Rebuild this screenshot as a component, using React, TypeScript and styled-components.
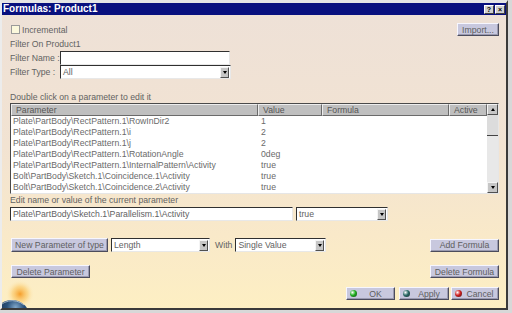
import styled, { createGlobalStyle } from "styled-components";

const GlobalStyle = createGlobalStyle`
  html, body { margin: 0; padding: 0; }
  body {
    width: 512px;
    height: 313px;
    overflow: hidden;
    background: #d8d8d8;
    font-family: "Liberation Sans", Arial, sans-serif;
  }
`;

const Window = styled.div`
  box-sizing: border-box;
  width: 508px;
  height: 310px;
  border-top: 3px solid #e4e4e4;
  border-left: 2px solid #ececec;
  border-right: 2px solid #3a3a3a;
  border-bottom: 2px solid #3a3a3a;
  display: flex;
  flex-direction: column;
`;

const TitleBar = styled.div`
  height: 12px;
  flex: none;
  background: #08107e;
  display: flex;
  align-items: center;
  justify-content: space-between;
  padding: 0 1px 0 1px;
`;

const Title = styled.span`
  color: #fff;
  font-weight: bold;
  font-size: 10px;
  line-height: 12px;
`;

const TitleButtons = styled.div`
  display: flex;
  gap: 1px;
`;

const TitleBtn = styled.div`
  width: 10px;
  height: 9px;
  box-sizing: border-box;
  background: #d0d0d0;
  border: 1px solid;
  border-color: #fff #404040 #404040 #fff;
  font-size: 7px;
  font-weight: bold;
  line-height: 7px;
  text-align: center;
  color: #000;
`;

const Body = styled.div`
  position: relative;
  flex: 1;
  overflow: hidden;
  padding: 0 7px 0 8px;
  display: flex;
  flex-direction: column;
  background: linear-gradient(#eee1d7 0%, #f2e3d2 45%, #f9e9c9 75%, #fdefc3 100%);
`;

const Row = styled.div<{ $mt?: number; $h?: number }>`
  display: flex;
  align-items: center;
  margin-top: ${(p) => p.$mt ?? 0}px;
  height: ${(p) => p.$h ?? 14}px;
  flex: none;
`;

const Spacer = styled.div`
  flex: 1;
`;

const Text = styled.div<{ $mt?: number }>`
  font-size: 8.7px;
  line-height: 11px;
  color: #626262;
  margin-top: ${(p) => p.$mt ?? 0}px;
  white-space: nowrap;
`;

const Label = styled.span<{ $w?: number; $ml?: number }>`
  font-size: 8.7px;
  color: #626262;
  white-space: nowrap;
  width: ${(p) => (p.$w ? `${p.$w}px` : "auto")};
  margin-left: ${(p) => p.$ml ?? 0}px;
  flex: none;
`;

const CheckBox = styled.div`
  width: 9px;
  height: 9px;
  box-sizing: border-box;
  margin: 0 2px 0 1px;
  background: #fbf8dc;
  border: 1px solid #9a9a9a;
`;

const Button = styled.button<{ $w: number; $h?: number }>`
  box-sizing: border-box;
  width: ${(p) => p.$w}px;
  height: ${(p) => p.$h ?? 13}px;
  padding: 0;
  margin: 0;
  flex: none;
  font-family: "Liberation Sans", Arial, sans-serif;
  font-size: 8.7px;
  color: #5e5e5e;
  background: #c8c8de;
  border: 1px solid;
  border-color: #f6f6ff #4c4c5c #4c4c5c #f6f6ff;
  box-shadow: inset -1px -1px 0 #9a9ab0;
  display: flex;
  align-items: center;
  justify-content: center;
`;

const BallButton = styled(Button)`
  justify-content: flex-start;
  padding-left: 3px;
`;

const Ball = styled.span<{ $c: string }>`
  width: 7px;
  height: 7px;
  border-radius: 50%;
  flex: none;
  background: radial-gradient(circle at 35% 35%, #fff 0%, ${(p) => p.$c} 45%, #111 120%);
`;

const BallText = styled.span`
  flex: 1;
  text-align: center;
`;

const TextBox = styled.div<{ $w: number }>`
  box-sizing: border-box;
  width: ${(p) => p.$w}px;
  height: 14px;
  flex: none;
  background: #fff;
  border: 1px solid;
  border-color: #303030 #e8e8e8 #e8e8e8 #303030;
  font-size: 8.7px;
  line-height: 12px;
  padding-left: 2px;
  color: #626262;
  white-space: nowrap;
  overflow: hidden;
`;

const SelectBox = styled(TextBox)`
  display: flex;
  align-items: center;
  padding-right: 1px;
`;

const SelectText = styled.span`
  flex: 1;
`;

const ArrowBtn = styled.div`
  width: 9px;
  height: 11px;
  box-sizing: border-box;
  background: #c6c6c6;
  border: 1px solid;
  border-color: #f4f4f4 #505050 #505050 #f4f4f4;
  display: flex;
  align-items: center;
  justify-content: center;
  &::after {
    content: "";
    border-left: 2px solid transparent;
    border-right: 2px solid transparent;
    border-top: 3px solid #000;
  }
`;

const UpArrowBtn = styled(ArrowBtn)`
  width: 11px;
  &::after {
    border-top: none;
    border-bottom: 3px solid #000;
  }
`;

const DownArrowBtn = styled(ArrowBtn)`
  width: 11px;
`;

const Table = styled.div`
  box-sizing: border-box;
  width: 489px;
  flex: none;
  background: #fff;
  border: 1px solid;
  border-color: #4a4a4a #e6e6e6 #e6e6e6 #4a4a4a;
  display: grid;
  grid-template-columns: 476px 11px;
`;

const cols = "247px 64px 127px 38px";

const TableMain = styled.div`
  display: flex;
  flex-direction: column;
`;

const HeaderRow = styled.div`
  display: grid;
  grid-template-columns: ${cols};
  height: 12px;
`;

const HeaderCell = styled.div`
  box-sizing: border-box;
  background: #bfbfbf;
  border: 1px solid;
  border-color: #ededed #6a6a6a #6a6a6a #ededed;
  font-size: 8.7px;
  line-height: 10px;
  color: #555;
  padding-left: 4px;
`;

const DataRow = styled.div`
  display: grid;
  grid-template-columns: ${cols};
  height: 11px;
`;

const DataCell = styled.div`
  font-size: 8.7px;
  line-height: 11px;
  color: #6a6a6a;
  padding-left: 2px;
  white-space: nowrap;
  overflow: hidden;
`;

const ValueCell = styled(DataCell)`
  padding-left: 3px;
`;

const ScrollBar = styled.div`
  display: flex;
  flex-direction: column;
  background: #e6e6e6;
`;

const Thumb = styled.div`
  height: 21px;
  box-sizing: border-box;
  background: #dcdcdc;
  border-bottom: 1px solid #444;
`;

const Track = styled.div`
  flex: 1;
  background: #e8e8e8;
`;

const Globe = styled.svg`
  position: absolute;
  left: 0;
  bottom: 0;
`;

const rows: [string, string][] = [
  ["Plate\\PartBody\\RectPattern.1\\RowInDir2", "1"],
  ["Plate\\PartBody\\RectPattern.1\\i", "2"],
  ["Plate\\PartBody\\RectPattern.1\\j", "2"],
  ["Plate\\PartBody\\RectPattern.1\\RotationAngle", "0deg"],
  ["Plate\\PartBody\\RectPattern.1\\InternalPattern\\Activity", "true"],
  ["Bolt\\PartBody\\Sketch.1\\Coincidence.1\\Activity", "true"],
  ["Bolt\\PartBody\\Sketch.1\\Coincidence.2\\Activity", "true"],
];

function Select(props: { w: number; value: string }) {
  return (
    <SelectBox $w={props.w}>
      <SelectText>{props.value}</SelectText>
      <ArrowBtn />
    </SelectBox>
  );
}

export default function App() {
  return (
    <>
      <GlobalStyle />
      <Window>
        <TitleBar>
          <Title>Formulas: Product1</Title>
          <TitleButtons>
            <TitleBtn>?</TitleBtn>
            <TitleBtn>×</TitleBtn>
          </TitleButtons>
        </TitleBar>
        <Body>
          <Row $mt={8} $h={13}>
            <CheckBox />
            <Label>Incremental</Label>
            <Spacer />
            <Button $w={42}>Import...</Button>
          </Row>
          <Text $mt={3}>Filter On Product1</Text>
          <Row $mt={1}>
            <Label $w={50}>Filter Name :</Label>
            <TextBox $w={170} />
          </Row>
          <Row>
            <Label $w={50}>Filter Type :</Label>
            <Select w={171} value="All" />
          </Row>
          <Text $mt={13}>Double click on a parameter to edit it</Text>
          <Table>
            <TableMain>
              <HeaderRow>
                <HeaderCell>Parameter</HeaderCell>
                <HeaderCell>Value</HeaderCell>
                <HeaderCell>Formula</HeaderCell>
                <HeaderCell>Active</HeaderCell>
              </HeaderRow>
              {rows.map(([name, value]) => (
                <DataRow key={name}>
                  <DataCell>{name}</DataCell>
                  <ValueCell>{value}</ValueCell>
                  <DataCell />
                  <DataCell />
                </DataRow>
              ))}
            </TableMain>
            <ScrollBar>
              <UpArrowBtn />
              <Thumb />
              <Track />
              <DownArrowBtn />
            </ScrollBar>
          </Table>
          <Text $mt={1}>Edit name or value of the current parameter</Text>
          <Row $mt={1}>
            <TextBox $w={283}>{"Plate\\PartBody\\Sketch.1\\Parallelism.1\\Activity"}</TextBox>
            <Label $ml={3} />
            <Select w={92} value="true" />
          </Row>
          <Row $mt={17}>
            <Label $ml={1} />
            <Button $w={97} $h={14}>New Parameter of type</Button>
            <Label $ml={3} />
            <Select w={99} value="Length" />
            <Label $ml={5}>With</Label>
            <Label $ml={3} />
            <Select w={91} value="Single Value" />
            <Spacer />
            <Button $w={69}>Add Formula</Button>
          </Row>
          <Row $mt={13} $h={13}>
            <Label $ml={1} />
            <Button $w={79}>Delete Parameter</Button>
            <Spacer />
            <Button $w={69}>Delete Formula</Button>
          </Row>
          <Row $mt={9} $h={13}>
            <Spacer />
            <BallButton $w={49}>
              <Ball $c="#20b020" />
              <BallText>OK</BallText>
            </BallButton>
            <Label $ml={4} />
            <BallButton $w={50}>
              <Ball $c="#2c6a66" />
              <BallText>Apply</BallText>
            </BallButton>
            <Label $ml={2} />
            <BallButton $w={48}>
              <Ball $c="#d02020" />
              <BallText>Cancel</BallText>
            </BallButton>
          </Row>
          <Globe width="34" height="30" viewBox="0 0 34 30">
            <defs>
              <radialGradient id="glow" cx="0.5" cy="0.5" r="0.5">
                <stop offset="0%" stopColor="#f59a22" stopOpacity="0.95" />
                <stop offset="55%" stopColor="#fbc660" stopOpacity="0.55" />
                <stop offset="100%" stopColor="#fde9b8" stopOpacity="0" />
              </radialGradient>
              <radialGradient id="earth" cx="0.6" cy="0.2" r="0.8">
                <stop offset="0%" stopColor="#7fa6c8" />
                <stop offset="30%" stopColor="#28507a" />
                <stop offset="100%" stopColor="#0c1a30" />
              </radialGradient>
            </defs>
            <circle cx="18" cy="16" r="14" fill="url(#glow)" />
            <circle cx="10" cy="40" r="18" fill="url(#earth)" />
            <path d="M -6 33 A 18 18 0 0 1 22 27" fill="none" stroke="#dfe8f0" strokeWidth="0.8" opacity="0.8" />
          </Globe>
        </Body>
      </Window>
    </>
  );
}
